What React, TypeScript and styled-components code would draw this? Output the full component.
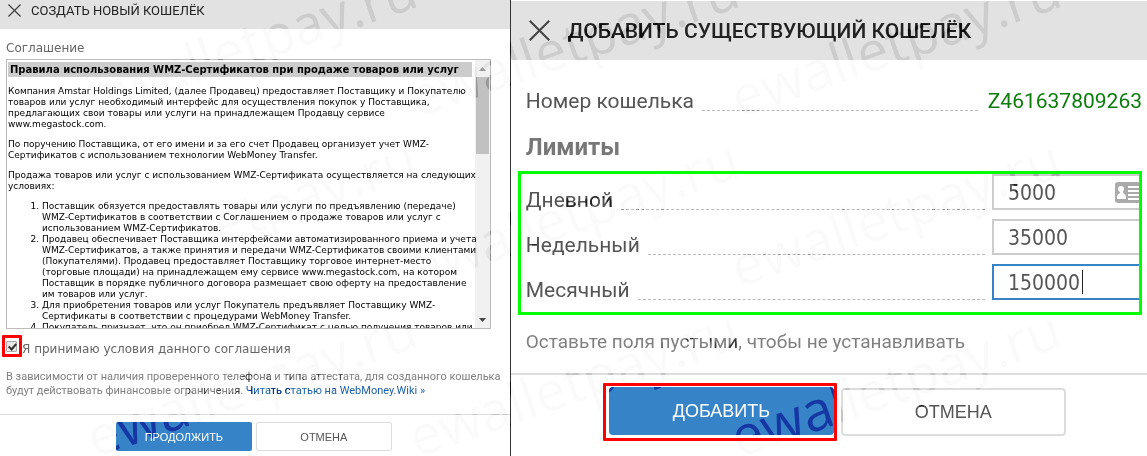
import React from "react";
import styled, { createGlobalStyle } from "styled-components";

const verdana = `Verdana, "DejaVu Sans", sans-serif`;
const roboto = `Roboto, sans-serif`;

const GlobalStyle = createGlobalStyle`
  * { box-sizing: border-box; }
  body { margin: 0; background: #fff; font-family: ${roboto}; }
  h1, h2, h3, p, ol { margin: 0; padding: 0; }
`;

const Page = styled.main`
  position: relative;
  display: grid;
  grid-template-columns: 4fr 5fr;
  min-height: 100vh;
  overflow: hidden;
  background: #fff;
`;

const Panel = styled.section<{ $divided?: boolean }>`
  display: flex;
  flex-direction: column;
  min-width: 0;
  padding-top: ${(p) => (p.$divided ? 1 : 0)}px;
  border-left: ${(p) => (p.$divided ? "1px solid #333" : "none")};
`;

const Header = styled.header<{ $large?: boolean }>`
  display: flex;
  align-items: center;
  gap: ${(p) => (p.$large ? 18 : 10)}px;
  height: ${(p) => (p.$large ? 59 : 29)}px;
  padding: ${(p) => (p.$large ? "0 18px" : "0 8px 8px")};
  background: #e2e2e2;
`;

const CloseButton = styled.button`
  display: flex;
  padding: 0;
  border: 0;
  background: none;
`;

const Title = styled.h1<{ $large?: boolean }>`
  color: #222;
  font-size: ${(p) => (p.$large ? 21 : 13)}px;
  font-weight: ${(p) => (p.$large ? 500 : 400)};
  line-height: 24px;
  white-space: nowrap;
`;

const AgreementBody = styled.div`
  flex: 1;
  padding: 9px 6px 0;
  font-family: ${verdana};
`;

const FieldTitle = styled.h2`
  color: #666;
  font-size: 12px;
  font-weight: 400;
  line-height: 20px;
`;

const AgreementBox = styled.div`
  display: flex;
  height: 270px;
  margin: 1px 13px 0 0;
  border: 1px solid #bbb;
`;

const AgreementText = styled.article`
  position: relative;
  z-index: 1;
  flex: 1;
  min-width: 0;
  padding: 2px 3px 0 1px;
  overflow-x: visible;
  overflow-y: clip;
  color: #000;
  font-size: 9px;
  line-height: 11px;
  white-space: nowrap;
`;

const AgreementTitle = styled.h3`
  padding: 0 2px;
  background: #ccc;
  font-size: 10px;
  line-height: 15px;
`;

const Paragraph = styled.p`
  margin: 9px 0;
`;

const Terms = styled.ol`
  padding-left: 34px;
`;

const Scrollbar = styled.div`
  display: flex;
  flex-direction: column;
  align-items: center;
  width: 15px;
  background: #f1f1f1;
`;

const ScrollArrow = styled.span`
  display: flex;
  align-items: center;
  justify-content: center;
  height: 17px;
`;

const ScrollThumb = styled.span`
  width: 13px;
  height: 77px;
  margin-bottom: auto;
  background: #c1c1c1;
`;

const Accept = styled.label`
  display: flex;
  align-items: flex-end;
  margin: 6px 0 0 -4px;
  color: #666;
  font-size: 12px;
  line-height: 16px;
`;

const RedFrame = styled.span<{ $pad: string }>`
  display: flex;
  padding: ${(p) => p.$pad};
  border: 3px solid #f00;
  border-radius: 1px;
`;

const Checkbox = styled.input`
  appearance: none;
  position: relative;
  width: 11px;
  height: 11px;
  margin: 0;
  border: 1px solid #aaa;
  border-radius: 1px;
  background: #e8e8e8;

  &:checked::after {
    content: "";
    position: absolute;
    left: 3px;
    top: 0;
    width: 3px;
    height: 6px;
    border: solid #333;
    border-width: 0 2px 2px 0;
    transform: rotate(42deg);
  }
`;

const Note = styled.p`
  margin-top: 13px;
  color: #808080;
  font-family: ${roboto};
  font-size: 11px;
  line-height: 14px;
  white-space: nowrap;
`;

const WikiLink = styled.a`
  color: #1d62a5;
  text-decoration: none;
`;

const Footer = styled.footer<{ $large?: boolean }>`
  display: flex;
  justify-content: center;
  align-items: ${(p) => (p.$large ? "center" : "flex-start")};
  gap: 4px;
  padding: ${(p) => (p.$large ? "8px 0 15px 11px" : "7px 2px 5px 0")};
  border-top: ${(p) => (p.$large ? 2 : 1)}px solid #ddd;
`;

const Button = styled.button<{ $large?: boolean; $primary?: boolean }>`
  width: ${(p) => (p.$large ? 225 : 136)}px;
  height: ${(p) => (p.$large ? 48 : 29)}px;
  padding: 0;
  border: ${(p) => (p.$primary ? "0" : p.$large ? "2px solid #ddd" : "1px solid #ddd")};
  border-radius: ${(p) => (p.$large ? 4 : 2)}px;
  background: ${(p) => (p.$primary ? "#3783c8" : "#fff")};
  color: ${(p) => (p.$primary ? "#fff" : "#555")};
  font-family: "Liberation Sans", Arial, sans-serif;
  font-size: ${(p) => (p.$large ? 18 : 11)}px;
`;

const WalletBody = styled.div`
  flex: 1;
  padding: 31px 5px 0 7px;
`;

const Row = styled.div`
  display: flex;
  align-items: flex-end;
  color: #555;
  font-size: 21px;
  line-height: 20px;
`;

const NumberRow = styled(Row)`
  padding-left: 8px;
`;

const Leader = styled.span<{ $end: number }>`
  flex: 1;
  margin: 0 ${(p) => p.$end}px 0 8px;
  border-bottom: 1px dashed #bbb;
`;

const WalletNumber = styled.span`
  color: #0c7d0c;
`;

const LimitsTitle = styled.h2`
  margin: 22px 8px 10px;
  color: #777;
  font-size: 24px;
  font-weight: 700;
  line-height: 28px;
`;

const LimitsBox = styled.div`
  display: grid;
  gap: 9px;
  padding: 0 0 12px 5px;
  border: 3px solid #0f0;
`;

const InputWrap = styled.span`
  position: relative;
  display: flex;
  width: 147px;
`;

const LimitInput = styled.input<{ $active?: boolean }>`
  width: 100%;
  height: 36px;
  padding: 2px 14px 0;
  border: 2px solid ${(p) => (p.$active ? "#3783c8" : "#ccc")};
  border-right: 0;
  border-radius: 0;
  outline: 0;
  background: #fff;
  color: #555;
  font-family: Tahoma, "DejaVu Sans Condensed", sans-serif;
  font-size: 21px;
`;

const CardIcon = styled.svg`
  position: absolute;
  right: 0;
  top: 8px;
`;

const Caret = styled.i`
  position: absolute;
  left: 90px;
  top: 6px;
  width: 1px;
  height: 24px;
  background: #222;
`;

const Hint = styled.p`
  margin: 15px 8px 19px;
  color: #808080;
  font-size: 19px;
  line-height: 24px;
  white-space: nowrap;
`;

const Watermarks = styled.div`
  position: absolute;
  inset: 0;
  display: grid;
  grid-template-columns: repeat(3, 322px);
  grid-auto-rows: 170px;
  padding-left: 95px;
  pointer-events: none;
  font: 400 55px/60px "Open Sans", sans-serif;
`;

const Watermark = styled.span`
  display: grid;
  align-content: start;
  justify-items: start;
  padding-top: 67px;

  > span, &::after {
    grid-area: 1 / 1;
    transform: rotate(-19deg);
    transform-origin: 0 51px;
  }
  > span {
    color: #808080;
    opacity: 0.6;
    mix-blend-mode: color-burn;
  }
  &::after {
    content: "ewalletpay.ru";
    color: rgba(0, 0, 0, 0.02);
  }
`;

const Cross = ({ size }: { size: number }) => (
  <svg width={size} height={size} viewBox="0 0 20 20" stroke="#444" strokeWidth="2" fill="none">
    <path d="M.7.7l18.6 18.6M19.3.7.7 19.3" />
  </svg>
);

const limits = [
  { id: "day", label: "Дневной", value: "5000", card: true },
  { id: "week", label: "Недельный", value: "35000" },
  { id: "month", label: "Месячный", value: "150000", active: true },
];

const terms = [
  [
    "Поставщик обязуется предоставлять товары или услуги по предъявлению (передаче)",
    "WMZ-Сертификатов в соответствии с Соглашением о продаже товаров или услуг с",
    "использованием WMZ-Сертификатов.",
  ],
  [
    "Продавец обеспечивает Поставщика интерфейсами автоматизированного приема и учета",
    "WMZ-Сертификатов, а также принятия и передачи WMZ-Сертификатов своими клиентами",
    "(Покупателями). Продавец предоставляет Поставщику торговое интернет-место",
    "(торговые площади) на принадлежащем ему сервисе www.megastock.com, на котором",
    "Поставщик в порядке публичного договора размещает свою оферту на предоставление",
    "им товаров или услуг.",
  ],
  [
    "Для приобретения товаров или услуг Покупатель предъявляет Поставщику WMZ-",
    "Сертификаты в соответствии с процедурами WebMoney Transfer.",
  ],
  ["Покупатель признает, что он приобрел WMZ-Сертификат с целью получения товаров или"],
];

const paragraphs = [
  [
    "Компания Amstar Holdings Limited, (далее Продавец) предоставляет Поставщику и Покупателю",
    "товаров или услуг необходимый интерфейс для осуществления покупок у Поставщика,",
    "предлагающих свои товары или услуги на принадлежащем Продавцу сервисе",
    "www.megastock.com.",
  ],
  [
    "По поручению Поставщика, от его имени и за его счет Продавец организует учет WMZ-",
    "Сертификатов с использованием технологии WebMoney Transfer.",
  ],
  ["Продажа товаров или услуг с использованием WMZ-Сертификата осуществляется на следующих", "условиях:"],
];

const Lines = ({ lines }: { lines: string[] }) => (
  <>
    {lines.map((line, i) => (
      <React.Fragment key={line}>
        {i > 0 && <br />}
        {line}
      </React.Fragment>
    ))}
  </>
);

export default function App() {
  return (
    <Page>
      <GlobalStyle />
      <Panel>
        <Header>
          <CloseButton aria-label="Закрыть">
            <Cross size={13} />
          </CloseButton>
          <Title>СОЗДАТЬ НОВЫЙ КОШЕЛЁК</Title>
        </Header>
        <AgreementBody>
          <FieldTitle>Соглашение</FieldTitle>
          <AgreementBox>
            <AgreementText>
              <AgreementTitle>Правила использования WMZ-Сертификатов при продаже товаров или услуг</AgreementTitle>
              {paragraphs.map((lines) => (
                <Paragraph key={lines[0]}>
                  <Lines lines={lines} />
                </Paragraph>
              ))}
              <Terms>
                {terms.map((lines) => (
                  <li key={lines[0]}>
                    <Lines lines={lines} />
                  </li>
                ))}
              </Terms>
            </AgreementText>
            <Scrollbar aria-hidden="true">
              <ScrollArrow>
                <svg width="7" height="4" viewBox="0 0 7 4" fill="#999">
                  <path d="M0 4 3.5 0 7 4z" />
                </svg>
              </ScrollArrow>
              <ScrollThumb />
              <ScrollArrow>
                <svg width="7" height="4" viewBox="0 0 7 4" fill="#444">
                  <path d="M0 0h7L3.5 4z" />
                </svg>
              </ScrollArrow>
            </Scrollbar>
          </AgreementBox>
          <Accept>
            <RedFrame $pad="3px 2px 2px 1px">
              <Checkbox type="checkbox" defaultChecked />
            </RedFrame>
            Я принимаю условия данного соглашения
          </Accept>
          <Note>
            В зависимости от наличия проверенного телефона и типа аттестата, для созданного кошелька
            <br />
            будут действовать финансовые ограничения. <WikiLink href="#wiki">Читать статью на WebMoney.Wiki »</WikiLink>
          </Note>
        </AgreementBody>
        <Footer>
          <Button $primary>ПРОДОЛЖИТЬ</Button>
          <Button>ОТМЕНА</Button>
        </Footer>
      </Panel>

      <Panel $divided>
        <Header $large>
          <CloseButton aria-label="Закрыть">
            <Cross size={21} />
          </CloseButton>
          <Title $large>ДОБАВИТЬ СУЩЕСТВУЮЩИЙ КОШЕЛЁК</Title>
        </Header>
        <WalletBody>
          <NumberRow>
            <span>Номер кошелька</span>
            <Leader $end={10} />
            <WalletNumber>Z461637809263</WalletNumber>
          </NumberRow>
          <LimitsTitle>Лимиты</LimitsTitle>
          <LimitsBox>
            {limits.map((limit) => (
              <Row key={limit.id}>
                <label htmlFor={limit.id}>{limit.label}</label>
                <Leader $end={7} />
                <InputWrap>
                  <LimitInput id={limit.id} defaultValue={limit.value} $active={limit.active} />
                  {limit.card && (
                    <CardIcon width="24" height="21" viewBox="0 0 24 21">
                      <rect width="25" height="21" rx="3" fill="#aaa" />
                      <circle cx="6" cy="7" r="3" fill="#fff" />
                      <path
                        d="M5 9h3v2c2 1 3 2 3 4V17H2v-2c0-2 1-3 3-4zM13 4h11v2H13zM13 8h11v2H13zM13 12h11v2H13zM13 16h11v2H13z"
                        fill="#fff"
                      />
                    </CardIcon>
                  )}
                  {limit.active && <Caret />}
                </InputWrap>
              </Row>
            ))}
          </LimitsBox>
          <Hint>Оставьте поля пустыми, чтобы не устанавливать</Hint>
        </WalletBody>
        <Footer $large>
          <RedFrame $pad="1px 0 3px 3px">
            <Button $large $primary>
              ДОБАВИТЬ
            </Button>
          </RedFrame>
          <Button $large>ОТМЕНА</Button>
        </Footer>
      </Panel>

      <Watermarks aria-hidden="true">
        {Array.from({ length: 9 }, (_, i) => (
          <Watermark key={i}>
            <span>ewalletpay.ru</span>
          </Watermark>
        ))}
      </Watermarks>
    </Page>
  );
}
